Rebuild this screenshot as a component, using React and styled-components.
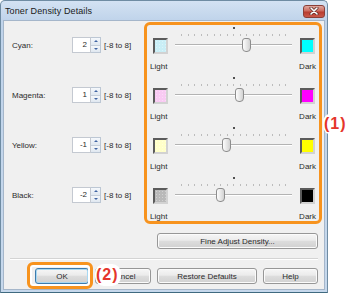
import styled, { createGlobalStyle } from 'styled-components';

const GlobalStyle = createGlobalStyle`
  body {
    margin: 0;
    background: #fff;
    font-family: "Liberation Sans", Arial, sans-serif;
  }
`;

const channels = [
  { name: 'Cyan:', value: 2, light: '#c9eef6', dark: '#00ffff' },
  { name: 'Magenta:', value: 1, light: '#f9caf3', dark: '#ff00ff' },
  { name: 'Yellow:', value: -1, light: '#ffffc9', dark: '#ffff00' },
  { name: 'Black:', value: -2, light: '#b9b9b9', dark: '#000000' },
];

const ticks = Array.from({ length: 17 }, (_, i) => i);

export default function App() {
  return (
    <>
      <GlobalStyle />
      <Window>
        <TitleBar>
          <Title>Toner Density Details</Title>
          <CloseButton>
            <svg width="10" height="8" viewBox="0 0 10 8">
              <path d="M2 1 L8 7 M8 1 L2 7" stroke="#5a2a26" strokeWidth="3" strokeLinecap="round" />
              <path d="M2 1 L8 7 M8 1 L2 7" stroke="#fff" strokeWidth="1.6" strokeLinecap="round" />
            </svg>
          </CloseButton>
        </TitleBar>
        <Body>
          <Main>
            <LeftColumn>
              {channels.map((c) => (
                <ChannelRow key={c.name}>
                  <ChannelLabel>{c.name}</ChannelLabel>
                  <SpinInput>{c.value}</SpinInput>
                  <SpinArrows>
                    <ArrowHalf $top>
                      <Triangle $up />
                    </ArrowHalf>
                    <ArrowHalf>
                      <Triangle />
                    </ArrowHalf>
                  </SpinArrows>
                  <Range>[-8 to 8]</Range>
                </ChannelRow>
              ))}
            </LeftColumn>
            <Panel>
              {channels.map((c) => (
                <DensityRow key={c.name}>
                  <EndCol>
                    <Swatch $color={c.light} $light />
                    <EndLabel>Light</EndLabel>
                  </EndCol>
                  <Slider>
                    <CenterMark />
                    <TickRow>
                      {ticks.map((t) => (
                        <Tick key={t} />
                      ))}
                    </TickRow>
                    <Track />
                    <Thumb style={{ left: 58 + c.value * 6.5 - 4.5 }} />
                  </Slider>
                  <EndCol $right>
                    <Swatch $color={c.dark} $right />
                    <EndLabel>Dark</EndLabel>
                  </EndCol>
                </DensityRow>
              ))}
              <Callout $panel>(1)</Callout>
            </Panel>
          </Main>
          <FineRow>
            <Button $width={161}>Fine Adjust Density...</Button>
          </FineRow>
          <Separator />
          <ButtonRow>
            <OkWrap>
              <Button $width={54} $default>OK</Button>
              <Callout>(2)</Callout>
            </OkWrap>
            <Button $width={56}>Cancel</Button>
            <Button $width={100}>Restore Defaults</Button>
            <Button $width={55}>Help</Button>
          </ButtonRow>
        </Body>
      </Window>
    </>
  );
}

const Window = styled.div`
  width: 328px;
  height: 293px;
  box-sizing: border-box;
  border: 1px solid #6f8ca3;
  border-bottom-color: #3f6a80;
  border-radius: 5px 5px 0 0;
  background: linear-gradient(#d3e2f3, #bfd3ea 20px, #c6d8ec);
  padding: 0 2px 2px;
  display: flex;
  flex-direction: column;
`;

const TitleBar = styled.div`
  height: 19px;
  display: flex;
  align-items: center;
  justify-content: space-between;
  padding-left: 2px;
`;

const Title = styled.span`
  font-size: 9px;
  color: #1b1b1b;
  letter-spacing: 0.1px;
`;

const CloseButton = styled.div`
  width: 22px;
  height: 13px;
  margin-top: 1px;
  box-sizing: border-box;
  border: 1px solid #8a3f38;
  border-radius: 3px;
  background: linear-gradient(#e0a89f, #cc6a5e 45%, #b83d30 55%, #c9584a);
  display: flex;
  align-items: center;
  justify-content: center;
`;

const Body = styled.div`
  flex: 1;
  background: #f0f0f0;
  border: 1px solid #a5b6ca;
  padding: 1px 2px 5px 8px;
  display: flex;
  flex-direction: column;
`;

const Main = styled.div`
  display: flex;
  justify-content: space-between;
  align-items: flex-start;
`;

const LeftColumn = styled.div`
  padding-top: 15px;
  display: flex;
  flex-direction: column;
  gap: 34px;
`;

const ChannelRow = styled.div`
  display: flex;
  align-items: center;
  height: 16px;
  font-size: 8px;
  color: #2b2b2b;
`;

const ChannelLabel = styled.span`
  width: 60px;
`;

const SpinInput = styled.div`
  width: 19px;
  height: 16px;
  box-sizing: border-box;
  border: 1px solid #c4c9d1;
  background: #fff;
  text-align: right;
  padding-right: 3px;
  line-height: 14px;
`;

const SpinArrows = styled.div`
  width: 10px;
  height: 16px;
  box-sizing: border-box;
  border: 1px solid #bcc7d4;
  border-left: 0;
  display: flex;
  flex-direction: column;
`;

const ArrowHalf = styled.div`
  flex: 1;
  display: flex;
  align-items: center;
  justify-content: center;
  background: linear-gradient(#f5f8fb, #dfe7f0);
  border-bottom: ${({ $top }) => ($top ? '1px solid #c5cfdb' : '0')};
`;

const Triangle = styled.div`
  width: 0;
  height: 0;
  border-left: 2px solid transparent;
  border-right: 2px solid transparent;
  ${({ $up }) =>
    $up ? 'border-bottom: 2px solid #3f64a3;' : 'border-top: 2px solid #3f64a3;'}
`;

const Range = styled.span`
  margin-left: 3px;
`;

const Panel = styled.div`
  position: relative;
  width: 178px;
  height: 202px;
  box-sizing: border-box;
  border: 3px solid #f7931e;
  border-radius: 6px;
  padding: 1px 3px 0;
  display: flex;
  flex-direction: column;
  gap: 4px;
`;

const DensityRow = styled.div`
  display: flex;
  height: 46px;
`;

const EndCol = styled.div`
  width: ${({ $right }) => ($right ? '24px' : '25px')};
  display: flex;
  flex-direction: column;
  align-items: ${({ $right }) => ($right ? 'flex-end' : 'flex-start')};
`;

const Swatch = styled.div`
  width: 15px;
  height: 16px;
  margin-top: 12px;
  margin-left: ${({ $light }) => ($light ? '3px' : '0')};
  margin-right: ${({ $right }) => ($right ? '1px' : '0')};
  box-sizing: border-box;
  border: 2px solid;
  border-color: #5b5b5b #d2d2d2 #d2d2d2 #5b5b5b;
  background-color: ${({ $color }) => $color};
  background-image: ${({ $light }) =>
    $light ? 'radial-gradient(rgba(255,255,255,0.35) 0.6px, transparent 0.8px)' : 'none'};
  background-size: 3px 3px;
`;

const EndLabel = styled.span`
  margin-top: 8px;
  font-size: 8px;
  line-height: 10px;
  color: #2b2b2b;
`;

const Slider = styled.div`
  position: relative;
  width: 117px;
`;

const CenterMark = styled.div`
  position: absolute;
  top: 1px;
  left: 58px;
  width: 2px;
  height: 2px;
  background: #505050;
`;

const TickRow = styled.div`
  position: absolute;
  top: 8px;
  left: 6px;
  width: 105px;
  display: flex;
  justify-content: space-between;
`;

const Tick = styled.div`
  width: 1px;
  height: 2px;
  background: #bcbcbc;
`;

const Track = styled.div`
  position: absolute;
  top: 18px;
  left: 0;
  right: 0;
  height: 1px;
  background: #b3b3b3;
  border-bottom: 1px solid #fff;
`;

const Thumb = styled.div`
  position: absolute;
  top: 12px;
  width: 9px;
  height: 14px;
  box-sizing: border-box;
  border: 1px solid #8d8d8d;
  border-radius: 3px 3px 4px 4px;
  background: linear-gradient(90deg, #fdfdfd, #e4e4e4 60%, #d2d2d2);
`;

const Callout = styled.span`
  position: absolute;
  background: #fff;
  color: #e5352b;
  font-size: 16px;
  font-weight: bold;
  letter-spacing: 1px;
  line-height: 22px;
  padding: 0 2px 0 1px;
  border-radius: 9px;
  ${({ $panel }) => ($panel ? 'left: 176px; top: 88px;' : 'left: 60px; top: -4px;')}
`;

const FineRow = styled.div`
  display: flex;
  justify-content: flex-end;
  margin-top: 9px;
  padding-right: 4px;
`;

const Button = styled.div`
  width: ${({ $width }) => $width}px;
  height: 16px;
  box-sizing: border-box;
  border: 1px solid ${({ $default }) => ($default ? '#3d7bad' : '#979797')};
  border-radius: 3px;
  background: linear-gradient(#f6f6f6, #ebebeb 45%, #dddddd 50%, #d1d1d1);
  box-shadow: inset 0 0 0 1px ${({ $default }) => ($default ? '#a8d8f2' : '#fbfbfb')};
  font-size: 8px;
  color: #2b2b2b;
  display: flex;
  align-items: center;
  justify-content: center;
`;

const Separator = styled.div`
  margin: 9px 4px 0 -2px;
  border-top: 1px solid #d4d4d4;
  border-bottom: 1px solid #fff;
`;

const ButtonRow = styled.div`
  display: flex;
  justify-content: flex-end;
  gap: 6px;
  margin-top: 8px;
  padding-right: 4px;
`;

const OkWrap = styled.div`
  position: relative;

  &::before {
    content: '';
    position: absolute;
    top: -6px;
    bottom: -5px;
    left: -8px;
    right: -4px;
    border: 3px solid #f7931e;
    border-radius: 6px;
    box-shadow: inset 0 0 0 2px #fff;
  }
`;
